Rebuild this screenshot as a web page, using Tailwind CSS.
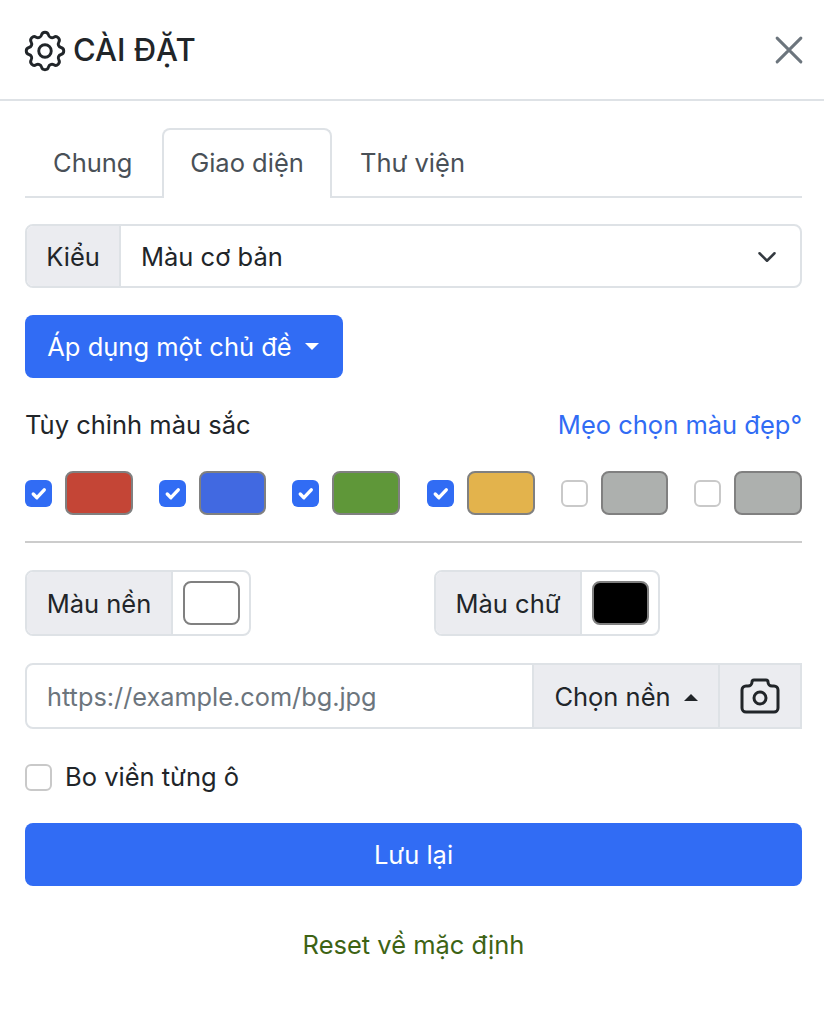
<!DOCTYPE html>
<html lang="vi">
<head>
    <meta charset="UTF-8">
    <meta name="viewport" content="width=device-width, initial-scale=1.0">
    <title>Cài đặt</title>
    <script src="https://cdn.jsdelivr.net/npm/@tailwindcss/browser@4"></script>
</head>
<body class="bg-white font-['Inter',sans-serif] text-[25.5px] leading-[38px] text-[#212529]">
    <div class="w-[824px] h-[1024px] overflow-hidden">
        <!-- header -->
        <div class="h-[101px] border-b-2 border-[#dee2e6] pl-[25px] pr-[16px] flex items-center justify-between">
            <div class="flex items-center gap-[3px]">
                <svg class="w-[50px] h-[50px] -ml-[5px] mt-[3px]" viewBox="0 0 24 24" fill="none" stroke="currentColor" stroke-width="1.4" stroke-linecap="round" stroke-linejoin="round">
                    <path d="M10.325 4.317c.426 -1.756 2.924 -1.756 3.35 0a1.724 1.724 0 0 0 2.573 1.066c1.543 -.94 3.31 .826 2.37 2.37a1.724 1.724 0 0 0 1.065 2.572c1.756 .426 1.756 2.924 0 3.35a1.724 1.724 0 0 0 -1.066 2.573c.94 1.543 -.826 3.31 -2.37 2.37a1.724 1.724 0 0 0 -2.572 1.065c-.426 1.756 -2.924 1.756 -3.35 0a1.724 1.724 0 0 0 -2.573 -1.066c-1.543 .94 -3.31 -.826 -2.37 -2.37a1.724 1.724 0 0 0 -1.065 -2.572c-1.756 -.426 -1.756 -2.924 0 -3.35a1.724 1.724 0 0 0 1.066 -2.573c-.94 -1.543 .826 -3.31 2.37 -2.37c1 .608 2.296 .07 2.572 -1.065z"/>
                    <circle cx="12" cy="12" r="3"/>
                </svg>
                <h1 class="text-[31px] font-medium">CÀI ĐẶT</h1>
            </div>
            <svg class="w-[38px] h-[38px] text-[#6c757d]" viewBox="0 0 24 24" fill="none" stroke="currentColor" stroke-width="1.9" stroke-linecap="round">
                <path d="M4.5 4.5l15 15M19.5 4.5l-15 15"/>
            </svg>
        </div>

        <div class="px-[25px] pr-[22px]">
            <!-- tabs -->
            <div class="mt-[27px] flex border-b-2 border-[#dee2e6] h-[70px] text-[#495057]">
                <div class="w-[137px] pl-[28px] pt-[2px] flex items-center">Chung</div>
                <div class="w-[170px] -mb-[2px] h-[70px] pb-[2px] flex items-center justify-center bg-white border-2 border-b-0 border-[#dee2e6] rounded-t-[8px]">Giao diện</div>
                <div class="pl-[28px] pt-[2px] flex items-center">Thư viện</div>
            </div>

            <!-- kieu -->
            <div class="mt-[26px] flex h-[64px] border-2 border-[#dee2e6] rounded-[8px] overflow-hidden">
                <div class="w-[94px] pt-[2px] flex items-center justify-center bg-[#ebecf0] border-r-2 border-[#dee2e6]">Kiểu</div>
                <div class="flex-1 flex items-center justify-between pl-[20px] pr-[23px] pt-[2px]">
                    <span>Màu cơ bản</span>
                    <svg class="w-[20px] h-[20px]" viewBox="0 0 16 16" fill="none" stroke="#343a40" stroke-width="2" stroke-linecap="round" stroke-linejoin="round"><path d="M2 5l6 6 6-6"/></svg>
                </div>
            </div>

            <!-- chu de -->
            <button class="mt-[27px] h-[63px] w-[318px] pr-[2px] bg-[#316cf4] text-white rounded-[8px] flex items-center justify-center gap-[13px]">
                Áp dụng một chủ đề
                <span class="w-0 h-0 border-x-[7px] border-x-transparent border-t-[7px] border-t-white"></span>
            </button>

            <!-- mau sac -->
            <div class="mt-[28px] flex justify-between h-[38px] items-center">
                <span>Tùy chỉnh màu sắc</span>
                <a class="text-[#316cf4]">Mẹo chọn màu đẹp°</a>
            </div>
            <div class="mt-[27px] flex justify-between">
                <div class="flex items-center gap-[13px]">
                    <div class="w-[27px] h-[27px] rounded-[6px] bg-[#316cf4] flex items-center justify-center"><svg class="w-[21px] h-[21px]" viewBox="0 0 20 20" fill="none" stroke="#fff" stroke-width="3.2" stroke-linecap="round" stroke-linejoin="round"><path d="M5 10.5l3.5 3.5 7-7.5"/></svg></div>
                    <div class="w-[68px] h-[44px] rounded-[8px] border-2 border-[#808080] bg-[#c44536]"></div>
                </div>
                <div class="flex items-center gap-[13px]">
                    <div class="w-[27px] h-[27px] rounded-[6px] bg-[#316cf4] flex items-center justify-center"><svg class="w-[21px] h-[21px]" viewBox="0 0 20 20" fill="none" stroke="#fff" stroke-width="3.2" stroke-linecap="round" stroke-linejoin="round"><path d="M5 10.5l3.5 3.5 7-7.5"/></svg></div>
                    <div class="w-[67px] h-[44px] rounded-[8px] border-2 border-[#808080] bg-[#4169e1]"></div>
                </div>
                <div class="flex items-center gap-[13px]">
                    <div class="w-[27px] h-[27px] rounded-[6px] bg-[#316cf4] flex items-center justify-center"><svg class="w-[21px] h-[21px]" viewBox="0 0 20 20" fill="none" stroke="#fff" stroke-width="3.2" stroke-linecap="round" stroke-linejoin="round"><path d="M5 10.5l3.5 3.5 7-7.5"/></svg></div>
                    <div class="w-[68px] h-[44px] rounded-[8px] border-2 border-[#808080] bg-[#5f9739]"></div>
                </div>
                <div class="flex items-center gap-[13px]">
                    <div class="w-[27px] h-[27px] rounded-[6px] bg-[#316cf4] flex items-center justify-center"><svg class="w-[21px] h-[21px]" viewBox="0 0 20 20" fill="none" stroke="#fff" stroke-width="3.2" stroke-linecap="round" stroke-linejoin="round"><path d="M5 10.5l3.5 3.5 7-7.5"/></svg></div>
                    <div class="w-[68px] h-[44px] rounded-[8px] border-2 border-[#808080] bg-[#e3b34c]"></div>
                </div>
                <div class="flex items-center gap-[13px]">
                    <div class="w-[27px] h-[27px] rounded-[6px] bg-white border-2 border-[#c9c9c9]"></div>
                    <div class="w-[67px] h-[44px] rounded-[8px] border-2 border-[#808080] bg-[#adb0ae]"></div>
                </div>
                <div class="flex items-center gap-[13px]">
                    <div class="w-[27px] h-[27px] rounded-[6px] bg-white border-2 border-[#c9c9c9]"></div>
                    <div class="w-[68px] h-[44px] rounded-[8px] border-2 border-[#808080] bg-[#adb0ae]"></div>
                </div>
            </div>

            <hr class="mt-[26px] border-t-2 border-[#cccccc]">

            <!-- mau nen / mau chu -->
            <div class="mt-[27px] flex">
                <div class="w-[409px]">
                    <div class="w-[226px] h-[66px] flex border-2 border-[#dee2e6] rounded-[8px] overflow-hidden">
                        <div class="w-[146px] pt-[2px] flex items-center justify-center bg-[#ebecf0] border-r-2 border-[#dee2e6]">Màu nền</div>
                        <div class="flex-1 flex items-center justify-center"><div class="w-[57px] h-[44px] rounded-[8px] border-2 border-[#808080] bg-white"></div></div>
                    </div>
                </div>
                <div class="w-[226px] h-[66px] flex border-2 border-[#dee2e6] rounded-[8px] overflow-hidden">
                    <div class="w-[146px] pt-[2px] flex items-center justify-center bg-[#ebecf0] border-r-2 border-[#dee2e6]">Màu chữ</div>
                    <div class="flex-1 flex items-center justify-center"><div class="w-[57px] h-[44px] rounded-[8px] border-2 border-[#808080] bg-black"></div></div>
                </div>
            </div>

            <!-- anh nen -->
            <div class="mt-[27px] flex h-[66px] border-2 border-[#dee2e6] rounded-l-[8px]">
                <div class="flex-1 flex items-center pl-[20px] pt-[2px] text-[#6c757d] text-[25.3px]">https://example.com/bg.jpg</div>
                <div class="w-[186px] pt-[2px] flex items-center justify-center gap-[13px] bg-[#ebecf0] border-l-2 border-[#dee2e6]">
                    Chọn nền
                    <span class="w-0 h-0 border-x-[7px] border-x-transparent border-b-[7px] border-b-[#212529]"></span>
                </div>
                <div class="w-[82px] flex items-center justify-center bg-[#ebecf0] border-l-2 border-[#dee2e6]">
                    <svg class="w-[48px] h-[48px]" viewBox="0 0 24 24" fill="none" stroke="#212529" stroke-width="1.5" stroke-linecap="round" stroke-linejoin="round">
                        <path d="M5 7h1a2 2 0 0 0 2 -2a1 1 0 0 1 1 -1h6a1 1 0 0 1 1 1a2 2 0 0 0 2 2h1a2 2 0 0 1 2 2v9a2 2 0 0 1 -2 2h-14a2 2 0 0 1 -2 -2v-9a2 2 0 0 1 2 -2"/>
                        <circle cx="12" cy="13" r="3"/>
                    </svg>
                </div>
            </div>

            <!-- bo vien -->
            <div class="mt-[29px] flex items-center gap-[13px] h-[38px]">
                <div class="w-[27px] h-[27px] rounded-[6px] bg-white border-2 border-[#c9c9c9]"></div>
                <span>Bo viền từng ô</span>
            </div>

            <button class="mt-[27px] w-full h-[63px] pt-[1px] bg-[#316cf4] text-white rounded-[8px]">Lưu lại</button>

            <div class="mt-[40px] text-center text-[#3d6314]">Reset về mặc định</div>
        </div>
    </div>
</body>
</html>
